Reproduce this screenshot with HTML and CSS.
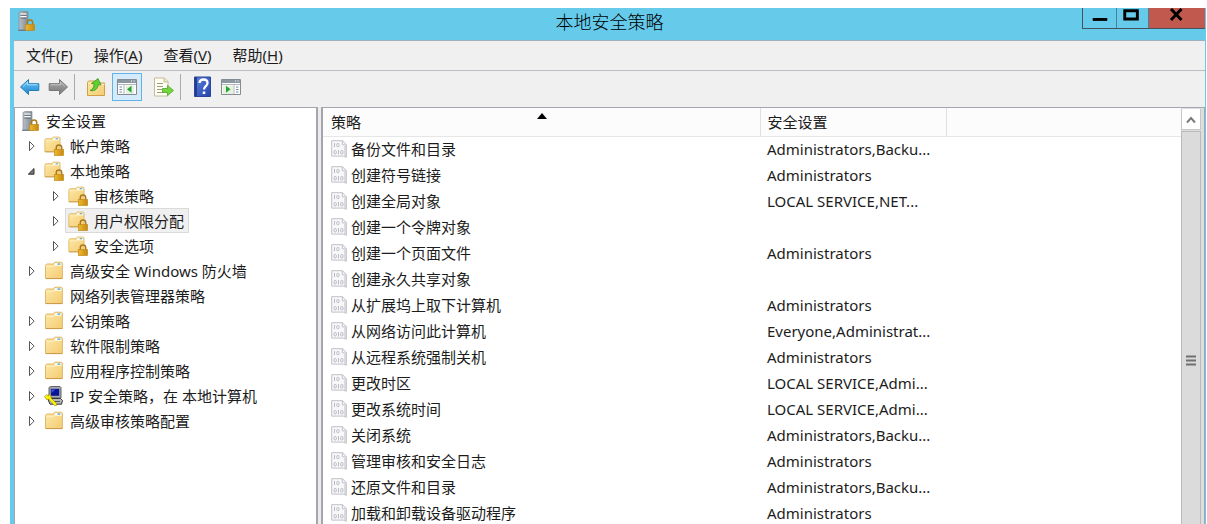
FILE: index.html
```html
<!DOCTYPE html>
<html lang="zh-CN">
<head>
<meta charset="utf-8">
<title>本地安全策略</title>
<link rel="stylesheet" href="styles.css">
</head>
<body>
<svg class="defs" aria-hidden="true">
  <defs>
    <linearGradient id="gold" x1="0" y1="0" x2="1" y2="1"><stop offset="0" stop-color="#fde9a8"/><stop offset="1" stop-color="#f4cb72"/></linearGradient>
    <linearGradient id="brass" x1="0" y1="0" x2="1" y2="0"><stop offset="0" stop-color="#f0b830"/><stop offset="1" stop-color="#c48a10"/></linearGradient>
    <linearGradient id="steel" x1="0" y1="0" x2="1" y2="0"><stop offset="0" stop-color="#b9c0c6"/><stop offset="1" stop-color="#7f8a94"/></linearGradient>
    <linearGradient id="sky" x1="0" y1="0" x2="0" y2="1"><stop offset="0" stop-color="#6cc6f7"/><stop offset="1" stop-color="#1d86d0"/></linearGradient>
    <linearGradient id="ash" x1="0" y1="0" x2="0" y2="1"><stop offset="0" stop-color="#a8a8a8"/><stop offset="1" stop-color="#7c7c7c"/></linearGradient>
    <linearGradient id="navy" x1="0" y1="0" x2="1" y2="1"><stop offset="0" stop-color="#5d80dc"/><stop offset="1" stop-color="#2444ac"/></linearGradient>
  </defs>
  <symbol id="lock" viewBox="0 0 10 12">
    <path d="M2.300 6V3.600a2.700 2.700 0 0 1 5.400 0V6" fill="none" stroke="#a97b1c" stroke-width="1.500"/>
    <rect x=".5" y="5.500" width="9" height="6" fill="url(#brass)" stroke="#c08a18" stroke-width=".7"/>
  </symbol>
  <symbol id="folder" viewBox="0 0 20 20">
    <path d="M1.500 17.500V4.500l1-1.500h7l1.200-1.800h6.800l.9 1v15.300z" fill="url(#gold)" stroke="#dcb260" stroke-width=".9"/>
    <path d="M11 1.900h6.300v2.800H10z" fill="#fffbe8"/><path d="M13.500 2.400h2.800v1.400h-2.800z" fill="#4aa3dc"/>
    <path d="M2.300 5.400h7.500l1-1h6.900" fill="none" stroke="#fff4cc" stroke-width=".8"/>
    <path d="M2 17.600h16.300" stroke="#c89a48" stroke-width="1"/>
  </symbol>
  <symbol id="locked-folder" viewBox="0 0 20 20">
    <use href="#folder" x="-1" y="0" width="19" height="18"/>
    <use href="#lock" x="10" y="8" width="10" height="12"/>
  </symbol>
  <symbol id="server" viewBox="0 0 18 20">
    <path d="M1 1.500 3 .500h7v18.500H1z" fill="url(#steel)" stroke="#87919a" stroke-width=".7"/>
    <path d="M2.500 2.500h6v1.400h-6zM2.500 5h6v1.400h-6z" fill="#fff"/><path d="M2.500 4.200h6M2.500 7h6" stroke="#45515c" stroke-width=".8"/>
    <path d="M0 19.300h11" stroke="#66727c"/>
    <use href="#lock" x="7" y="8" width="10" height="12"/>
  </symbol>
  <symbol id="computer" viewBox="0 0 20 20">
    <path d="M5 1.500 7 .500h9l1 1v10.500H5z" fill="#a7a9b0" stroke="#555" stroke-width=".9"/>
    <path d="M6.800 2.800h8.400v7H6.800z" fill="#0b1594"/><path d="M7.500 3.500h4L7.500 7z" fill="#3d58df"/>
    <path d="M4 13.500l3-1h9.500l2 2-1 3.700H6z" fill="#b8bac0" stroke="#333" stroke-width="1"/>
    <path d="M9 15.500h7" stroke="#555"/>
    <path d="M.600 10.500 2.400 8.700 4.800 10V8.200l2 1.300.2 2.500 5.600 5.600-.3 2.200-2-.3-5.500-6.200-2.500.1z" fill="#fff200" stroke="#8f8d14" stroke-width=".6"/>
  </symbol>
  <symbol id="policy" viewBox="0 0 16 18">
    <path d="M.700.700h10.800l3.800 4v12.600l-3-1.200H.700z" fill="#f8f8fa" stroke="#bfc0c7"/>
    <path d="M11.300.700v4.200h4M14 6v10" fill="none" stroke="#bfc0c7"/>
    <g fill="none" stroke="#b9bac2" stroke-width="1"><path d="M3.500 3v4M7.500 10v4.500"/><rect x="5.700" y="3.500" width="2.300" height="3.200" rx="1"/><rect x="3" y="10.500" width="2.300" height="3.500" rx="1"/><rect x="9.700" y="10.500" width="2.300" height="3.500" rx="1"/></g>
  </symbol>
  <symbol id="closed" viewBox="0 0 13 13"><path d="M4.500 2.500v9.200l4.600-4.600z" fill="#fff" stroke="#555"/></symbol>
  <symbol id="open" viewBox="0 0 13 13"><path d="M9 4.500v5.700H3.300z" fill="#777" stroke="#333"/></symbol>
</svg>

<div class="window">
  <header class="titlebar">
    <svg class="app-icon"><use href="#server"/></svg>
    <h1 class="title">本地安全策略</h1>
    <div class="captions">
      <button class="caption" aria-label="最小化"><svg viewBox="0 0 34 20"><path d="M10 11.500h15" stroke="#000" stroke-width="3"/></svg></button>
      <button class="caption maximize" aria-label="最大化"><svg viewBox="0 0 32 20"><path d="M8 2.500h13v8.500H8z" fill="none" stroke="#000" stroke-width="3"/></svg></button>
      <button class="caption close" aria-label="关闭"><svg viewBox="0 0 56 20"><path d="m22 1 10.500 11M32.500 1 22 12" stroke="#000" stroke-width="3"/></svg></button>
    </div>
  </header>

  <nav class="menubar">
    <button class="menu">文件(<u>F</u>)</button>
    <button class="menu">操作(<u>A</u>)</button>
    <button class="menu">查看(<u>V</u>)</button>
    <button class="menu">帮助(<u>H</u>)</button>
  </nav>

  <div class="toolbar">
    <button class="tool" aria-label="后退"><svg viewBox="0 0 22 22"><path d="m1.500 11 8-7.500v4.200h10.300v6.800H9.500v4z" fill="url(#sky)" stroke="#247fb9"/><path d="M4 10.500 8.600 6v2.800h9.900" fill="none" stroke="#a9e1ff"/></svg></button>
    <button class="tool" aria-label="前进"><svg viewBox="0 0 22 22"><path d="m20.500 11-8-7.500v4.200H2.200v6.800h10.300v4z" fill="url(#ash)" stroke="#777"/><path d="M3.500 8.800h10V6l4.500 4.500" fill="none" stroke="#c5c5c5"/></svg></button>
    <span class="separator"></span>
    <button class="tool" aria-label="向上"><svg viewBox="0 0 22 22"><path d="M2.500 19.500V6.500l1-1.500h6l1.500 2h8.500v12.500z" fill="url(#gold)" stroke="#cfa145"/><path d="M12.500 8.500h7" stroke="#fff7d9"/><path d="M5 14.500c2.800-1 4-3.500 4.200-6.500L6.500 7.500 13 2.500l3 6.500-2.700-.5c-.6 4.500-3.800 7.200-8.300 6z" fill="#5fcf31" stroke="#38961e" stroke-width=".8"/></svg></button>
    <button class="tool pressed" aria-label="显示/隐藏控制台树" aria-pressed="true"><svg viewBox="0 0 22 22"><path d="M1.500 3.500h19v15h-19z" fill="#fff" stroke="#858b93"/><path d="M2 4h18v3H2z" fill="#8d97a2"/><path d="M15 5h1M17.500 5h1" stroke="#fff"/><path d="M2 8.500h18M8 8v10" stroke="#b1b6bc"/><path d="M3.500 11H6M3.500 13.500H6M3.500 16H6" stroke="#6d8caa"/><path d="M10 9.500h8V18h-8z" fill="#e6f2df"/><path d="M15.500 9.800v7L11 13.300z" fill="#22a532"/></svg></button>
    <button class="tool export" aria-label="导出列表"><svg viewBox="0 0 22 22"><path d="M2.500 2h10l3.500 3.500V20H2.500z" fill="#fffef2" stroke="#c3bb9c"/><path d="M12 2v4h4" fill="#eee6c9" stroke="#c3bb9c"/><path d="M5 7.500h6M5 10.500h6M5 13.500h5M5 16.500h7" stroke="#a09b86"/><path d="M10.500 12.500h5V9.500l6 5-6 5v-3h-5z" fill="#75d53f" stroke="#4ba827" stroke-width=".8"/></svg></button>
    <span class="separator"></span>
    <button class="tool" aria-label="帮助"><svg viewBox="0 0 22 22"><path d="M2.500 1h16v19.500h-16z" fill="url(#navy)" stroke="#2a459b"/><path d="M4 1v19.500" stroke="#243b94" stroke-width="2"/><path d="M7.500 7c.2-2.300 1.700-3.500 4-3.500 2.500 0 4 1.300 4 3.400 0 3.300-3.500 3.100-3.500 6.600" fill="none" stroke="#fff" stroke-width="2.300"/><path d="M10.700 15.500h2.600V18h-2.600z" fill="#fff"/></svg></button>
    <button class="tool" aria-label="显示/隐藏操作窗格"><svg viewBox="0 0 22 22"><path d="M1.500 3.500h19v15h-19z" fill="#fff" stroke="#858b93"/><path d="M2 4h18v3H2z" fill="#8d97a2"/><path d="M15 5h1M17.500 5h1" stroke="#fff"/><path d="M2 8.500h18M14 8v10" stroke="#b1b6bc"/><path d="M16 11h2.500M16 13.500h2.500M16 16h2.500" stroke="#6d8caa"/><path d="M2.500 9.500H13V18H2.500z" fill="#e6f2df"/><path d="M6 9.800v7l4.500-3.500z" fill="#22a532"/></svg></button>
  </div>

  <main class="panes">
    <aside class="tree">
      <button class="node root"><svg class="root-icon"><use href="#server"/></svg>安全设置</button>
      <ul class="branch">
        <li><div class="row"><button class="expander" aria-label="展开"><svg><use href="#closed"/></svg></button><button class="node"><svg><use href="#locked-folder"/></svg>帐户策略</button></div></li>
        <li><div class="row"><button class="expander" aria-label="折叠"><svg><use href="#open"/></svg></button><button class="node"><svg><use href="#locked-folder"/></svg>本地策略</button></div>
          <ul class="branch nested">
            <li><div class="row"><button class="expander" aria-label="展开"><svg><use href="#closed"/></svg></button><button class="node"><svg><use href="#locked-folder"/></svg>审核策略</button></div></li>
            <li><div class="row"><button class="expander" aria-label="展开"><svg><use href="#closed"/></svg></button><button class="node selected"><svg><use href="#locked-folder"/></svg>用户权限分配</button></div></li>
            <li><div class="row"><button class="expander" aria-label="展开"><svg><use href="#closed"/></svg></button><button class="node"><svg><use href="#locked-folder"/></svg>安全选项</button></div></li>
          </ul>
        </li>
        <li><div class="row"><button class="expander" aria-label="展开"><svg><use href="#closed"/></svg></button><button class="node"><svg><use href="#folder"/></svg>高级安全 Windows 防火墙</button></div></li>
        <li><div class="row"><span class="expander"></span><button class="node"><svg><use href="#folder"/></svg>网络列表管理器策略</button></div></li>
        <li><div class="row"><button class="expander" aria-label="展开"><svg><use href="#closed"/></svg></button><button class="node"><svg><use href="#folder"/></svg>公钥策略</button></div></li>
        <li><div class="row"><button class="expander" aria-label="展开"><svg><use href="#closed"/></svg></button><button class="node"><svg><use href="#folder"/></svg>软件限制策略</button></div></li>
        <li><div class="row"><button class="expander" aria-label="展开"><svg><use href="#closed"/></svg></button><button class="node"><svg><use href="#folder"/></svg>应用程序控制策略</button></div></li>
        <li><div class="row"><button class="expander" aria-label="展开"><svg><use href="#closed"/></svg></button><button class="node"><svg><use href="#computer"/></svg>IP 安全策略，在 本地计算机</button></div></li>
        <li><div class="row"><button class="expander" aria-label="展开"><svg><use href="#closed"/></svg></button><button class="node"><svg><use href="#folder"/></svg>高级审核策略配置</button></div></li>
      </ul>
    </aside>

    <section class="list">
      <table class="policies">
        <colgroup><col class="col-name"><col class="col-setting"><col></colgroup>
        <thead>
          <tr><th class="sorted" aria-sort="ascending">策略<svg class="sort" viewBox="0 0 10 6"><path d="M0 6 5 0l5 6z"/></svg></th><th>安全设置</th><td></td></tr>
        </thead>
        <tbody>
          <tr><td><span class="policy"><svg><use href="#policy"/></svg>备份文件和目录</span></td><td>Administrators,Backu...</td><td></td></tr>
          <tr><td><span class="policy"><svg><use href="#policy"/></svg>创建符号链接</span></td><td>Administrators</td><td></td></tr>
          <tr><td><span class="policy"><svg><use href="#policy"/></svg>创建全局对象</span></td><td>LOCAL SERVICE,NET...</td><td></td></tr>
          <tr><td><span class="policy"><svg><use href="#policy"/></svg>创建一个令牌对象</span></td><td></td><td></td></tr>
          <tr><td><span class="policy"><svg><use href="#policy"/></svg>创建一个页面文件</span></td><td>Administrators</td><td></td></tr>
          <tr><td><span class="policy"><svg><use href="#policy"/></svg>创建永久共享对象</span></td><td></td><td></td></tr>
          <tr><td><span class="policy"><svg><use href="#policy"/></svg>从扩展坞上取下计算机</span></td><td>Administrators</td><td></td></tr>
          <tr><td><span class="policy"><svg><use href="#policy"/></svg>从网络访问此计算机</span></td><td>Everyone,Administrat...</td><td></td></tr>
          <tr><td><span class="policy"><svg><use href="#policy"/></svg>从远程系统强制关机</span></td><td>Administrators</td><td></td></tr>
          <tr><td><span class="policy"><svg><use href="#policy"/></svg>更改时区</span></td><td>LOCAL SERVICE,Admi...</td><td></td></tr>
          <tr><td><span class="policy"><svg><use href="#policy"/></svg>更改系统时间</span></td><td>LOCAL SERVICE,Admi...</td><td></td></tr>
          <tr><td><span class="policy"><svg><use href="#policy"/></svg>关闭系统</span></td><td>Administrators,Backu...</td><td></td></tr>
          <tr><td><span class="policy"><svg><use href="#policy"/></svg>管理审核和安全日志</span></td><td>Administrators</td><td></td></tr>
          <tr><td><span class="policy"><svg><use href="#policy"/></svg>还原文件和目录</span></td><td>Administrators,Backu...</td><td></td></tr>
          <tr><td><span class="policy"><svg><use href="#policy"/></svg>加载和卸载设备驱动程序</span></td><td>Administrators</td><td></td></tr>
        </tbody>
      </table>
      <div class="scrollbar">
        <button class="scroll-up" aria-label="向上滚动"><svg viewBox="0 0 18 20"><path d="m5 13.500 4-4.500 4 4.500" fill="none" stroke="#7b7b7b" stroke-width="2"/></svg></button>
        <div class="thumb"><svg class="grip" viewBox="0 0 10 11"><path d="M0 1.500h10M0 5.500h10M0 9.500h10" stroke="#707070" stroke-width="2"/></svg></div>
      </div>
    </section>
  </main>
</div>
</body>
</html>
```

FILE: styles.css
```css
* { box-sizing: border-box; }

body {
  margin: 0;
  height: 100vh;
  overflow: hidden;
  display: flex;
  flex-direction: column;
  padding: 8px 1px 0 10px;
  background: #fff;
  color: #1c1c1c;
  font: 15px/24px "Noto Sans", "Noto Sans CJK SC", sans-serif;
}

button {
  margin: 0;
  padding: 0;
  border: 0;
  background: none;
  color: inherit;
  font: inherit;
  white-space: nowrap;
}

svg { display: block; }

.defs { position: absolute; width: 0; height: 0; }

.window {
  flex: 1;
  min-height: 0;
  display: flex;
  flex-direction: column;
  padding: 0 1px 0 4px;
  background: #66caea;
}

/* title bar */
.titlebar {
  display: grid;
  grid-template-columns: 1fr auto 1fr;
  height: 33px;
  border-bottom: 1px solid #9fb0bd;
}

.app-icon { width: 18px; height: 20px; margin: 3px 0 0 4px; }

.title {
  margin: 0;
  font-size: 18px;
  line-height: 26px;
  font-weight: 300;
  font-family: "Noto Sans CJK SC", sans-serif;
  color: #000;
}

.captions {
  justify-self: end;
  display: flex;
  height: 21px;
  border: solid #43545c;
  border-width: 0 0 1px 1px;
}

.caption { width: 34px; height: 20px; border-right: 1px solid #4b7f93; }
.caption svg { width: 100%; height: 20px; }
.maximize { width: 32px; }
.close { width: 56px; border-right: 0; background: #c2594f; }

/* menus and tools */
.menubar {
  display: flex;
  gap: 21px;
  height: 30px;
  padding: 2px 12px;
  background: #f0f0f0;
  border-bottom: 1px solid #bcbcc2;
}

.menu { height: 24px; }
.menu u { font-style: normal; text-underline-offset: 2px; }

.toolbar {
  display: flex;
  align-items: center;
  gap: 6px;
  height: 36px;
  padding: 0 5px 5px;
  background: #f0f0f0;
}

.tool { width: 22px; height: 22px; }
.tool svg { width: 22px; height: 22px; }
.separator { width: 1px; height: 26px; margin: 0 4px 0 -1px; background: #a9a9a9; }
.export + .separator { margin: 0 5px 0 0; }
.pressed { width: 30px; height: 28px; margin-left: -1px; padding: 2px 3px; border: 1px solid #5fb3e6; background: #d5eafa; }
.export { margin-left: 4px; }

/* panes */
.panes { flex: 1; min-height: 0; display: flex; gap: 3px; background: #ececee; }

.tree {
  flex: 0 0 304px;
  overflow: hidden;
  background: #fff;
  border: solid #a5a5ad;
  border-width: 1px 2px 0 1px;
}

.branch { list-style: none; margin: 0; padding: 0 0 0 10px; }
.nested { padding-left: 24px; }
.row { display: flex; align-items: center; gap: 3px; height: 25px; }
.expander { width: 13px; height: 13px; }
.expander svg { width: 13px; height: 13px; }

.node {
  display: flex;
  align-items: center;
  gap: 6px;
  height: 25px;
  padding: 0 4px 0 2px;
  border: 1px solid transparent;
}

.node svg { width: 20px; height: 20px; }
.node .root-icon { width: 18px; }
.root { margin-left: 4px; }
.selected { background: #f0f0f0; border-color: #dadada; }

.list {
  flex: 1;
  min-width: 0;
  display: flex;
  overflow: hidden;
  background: #fff;
  border: solid #a5a5ad;
  border-width: 1px 1px 0 2px;
}

.policies {
  flex: 1;
  min-width: 0;
  align-self: flex-start;
  table-layout: fixed;
  border-collapse: collapse;
}

.col-name { width: 437px; }
.col-setting { width: 186px; }

.policies th, .policies td {
  height: 26px;
  padding: 0 7px;
  text-align: left;
  font-weight: 400;
  white-space: nowrap;
}

.policies th:first-child, .policies td:first-child { padding-left: 8px; }

.policies thead th, .policies thead td {
  height: 28px;
  background: #fcfcfc;
  border-bottom: 1px solid #e6e6e6;
}

.policies thead th { border-right: 1px solid #e0e0e0; }
.sorted { position: relative; }
.sort { position: absolute; top: 5px; left: calc(50% - 4px); width: 10px; height: 6px; }

.policy { display: flex; align-items: center; gap: 4px; }
.policy svg { width: 16px; height: 18px; }

.scrollbar {
  flex: 0 0 23px;
  display: flex;
  flex-direction: column;
  padding: 1px 3px 0 0;
  background: #dedede;
}

.scroll-up { height: 21px; background: #fff; border: solid #c6c6c6; border-width: 0 1px 1px; }
.scroll-up svg { width: 18px; height: 20px; }
.thumb { flex: 1; margin-top: 1px; padding-top: 223px; background: #dbdbdb; border: solid #bababa; border-width: 1px 1px 0; }
.grip { width: 10px; height: 11px; margin: 0 auto; }
```
